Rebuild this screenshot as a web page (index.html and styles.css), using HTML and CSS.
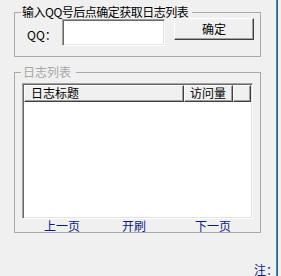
FILE: index.html
```html
<!DOCTYPE html>
<html lang="zh-CN">
<head>
<meta charset="UTF-8" />
<meta name="viewport" content="width=device-width, initial-scale=1" />
<title>日志列表</title>
<link rel="stylesheet" href="styles.css">
</head>
<body>

<div class="window">
  <fieldset class="group">
    <legend class="tight">输入QQ号后点确定获取日志列表</legend>
    <div class="qq-row">
      <label for="qq" class="qq-label">QQ：</label>
      <input type="text" id="qq" class="qq-input" />
      <button class="btn">确定</button>
    </div>
  </fieldset>

  <fieldset class="group group-list">
    <legend class="disabled">日志列表</legend>
    <div class="listview">
      <div class="lv-head">
        <div class="lv-col col-title">日志标题</div>
        <div class="lv-col col-count">访问量</div>
        <div class="lv-col col-fill"></div>
      </div>
      <div class="lv-body"></div>
    </div>
    <div class="pager">
      <a class="link link-prev">上一页</a>
      <a class="link link-refresh">开刷</a>
      <a class="link link-next">下一页</a>
    </div>
  </fieldset>

  <div class="note">注：请先输入QQ号</div>
</div>
<div class="edge"></div>

</body>
</html>
```

FILE: styles.css
```css
html, body { margin: 0; padding: 0; }
body { display: flex; width: 281px; height: 276px; overflow: hidden; background: #f0f0f0; font-family: "Noto Sans CJK SC", "DejaVu Sans", sans-serif; font-size: 12px; color: #000; }
.window { width: 276px; height: 276px; overflow: hidden; flex: none; }
.edge { width: 2px; flex: none; background: #2b5f86; box-shadow: inset 1px 0 #4f86b0; }

.group { box-sizing: border-box; width: 247px; margin: 5px 0 0 14px; padding: 0 0 0 6px; border: 1px solid #a8a8a8; min-width: 0; }
.group legend { padding: 0 4px 0 1px; line-height: 14px; }
.group legend.tight { letter-spacing: -0.5px; }
.group legend.disabled { color: #a6a6a6; padding: 0 5px 0 2px; }
.group:first-child { height: 52px; }
.group-list { margin-top: 8px; height: 168px; }

.qq-row { display: flex; align-items: flex-start; }
.qq-label { width: 35px; margin: 9px 0 0 6px; line-height: 14px; }
.qq-input { box-sizing: border-box; width: 103px; height: 27px; margin: 0; padding: 0 3px; background: #fff; border: 1px solid; border-color: #a0a0a0 #fff #fff #a0a0a0; box-shadow: inset 1px 1px #696969, inset -1px -1px #e3e3e3; outline: none; font: inherit; }
.btn { box-sizing: border-box; width: 80px; height: 22px; margin: -1px 0 0 9px; padding: 0; background: #f0f0f0; border: 1px solid; border-color: #fff #404040 #404040 #fff; box-shadow: inset -1px -1px #a0a0a0; font: inherit; line-height: 18px; color: #000; }

.listview { box-sizing: border-box; width: 231px; height: 136px; margin: 4px 0 0 1px; border: 1px solid; border-color: #a0a0a0 #fff #fff #a0a0a0; box-shadow: inset 1px 1px #696969, inset -1px -1px #e3e3e3; padding: 1px; display: flex; flex-direction: column; }
.lv-head { display: flex; height: 17px; flex: none; }
.lv-col { box-sizing: border-box; height: 17px; border: 1px solid; border-color: #fff #404040 #404040 #fff; box-shadow: inset -1px -1px #a0a0a0; background: #f0f0f0; line-height: 14px; white-space: nowrap; }
.col-title { width: 160px; padding-left: 6px; }
.col-count { width: 49px; padding-left: 5px; }
.col-fill { flex: 1; }
.lv-body { flex: 1; background: #fff; }

.pager { display: flex; height: 13px; line-height: 13px; }
.link { color: #0a1a8a; white-space: nowrap; cursor: pointer; }
.link-prev { margin-left: 23px; }
.link-refresh { margin-left: 42px; }
.link-next { margin-left: 49px; }

.note { margin: 30px 0 0 254px; white-space: nowrap; color: #0a1a8a; line-height: 14px; }
```
